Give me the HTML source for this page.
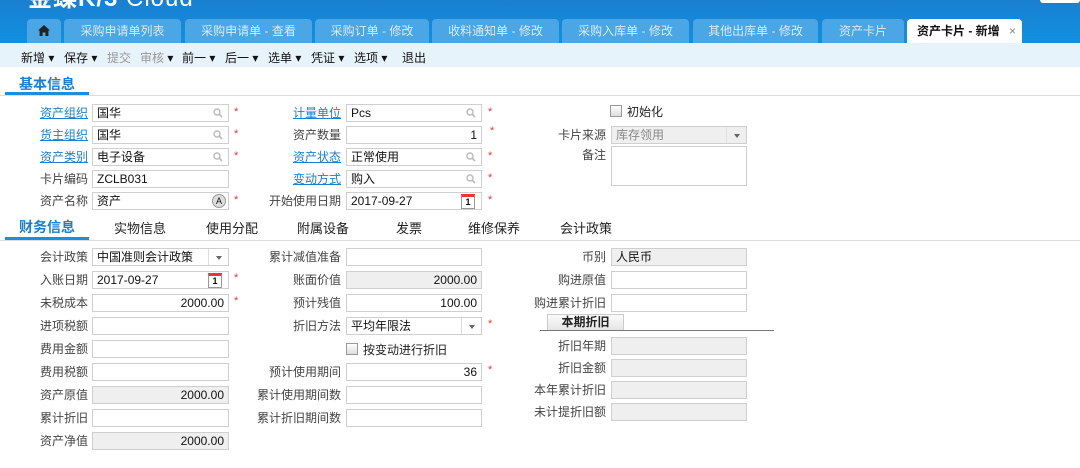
<!DOCTYPE html>
<html><head><meta charset="utf-8"><style>
*{margin:0;padding:0;box-sizing:border-box}
body{width:1080px;height:468px;overflow:hidden;background:#fff;font-family:"Liberation Sans","Noto Sans CJK SC",sans-serif;font-size:12px;color:#222;position:relative}
.a{position:absolute}
#hd{left:0;top:0;width:1080px;height:43px;background:linear-gradient(#1a7fd0,#1190e0)}
.tab{position:absolute;top:19px;height:24px;background:#4aa6e4;border-radius:4px 4px 0 0;color:#d6ecfb;font-size:12px;line-height:24px;text-align:center}
.tab.on{background:#fff;color:#111;font-weight:bold}
#tb{left:0;top:43px;width:1080px;height:24px;background:#e7f3fb}
.tbi{position:absolute;top:49px;font-size:12px;color:#111}
.l{position:absolute;width:140px;text-align:right;height:18px;line-height:18px;color:#444}
.l.u{color:#1a7fd0;text-decoration:underline}
.i{position:absolute;height:18px;border:1px solid #cfcfcf;background:#fff;line-height:16px;padding:0 4px;font-size:12px;color:#111}
.g{background:#efefef}
.r{text-align:right}
.s{position:absolute;color:#e33;font-size:11px}
.q{position:absolute;right:5px;top:3px;width:10px;height:10px}
.dd{position:absolute;right:0;top:0;width:20px;height:16px;border-left:1px solid #ddd}
.dd:after{content:"";position:absolute;left:7px;top:7px;border:3px solid transparent;border-top:4px solid #666}
.cal{position:absolute;right:6px;top:1px;width:14px;height:15px;border:1px solid #999;border-top:3px solid #e33;background:#fff;font-size:9px;font-weight:bold;text-align:center;line-height:11px}
.cb{position:absolute;width:12px;height:12px;border:1px solid #999;background:linear-gradient(#fff,#ddd)}
.t2{position:absolute;top:218px;font-size:13px;color:#222}
</style></head><body>
<div id="hd" class="a"></div>
<div class="a" style="left:28px;top:-22px;color:#fff;font-size:24px;font-weight:bold;letter-spacing:1px">金蝶K/3 <span style="font-weight:normal">Cloud</span></div>
<div class="a" style="left:1040px;top:-4px;width:40px;height:7px;background:#fff;border-radius:3px"></div>
<div class="tab" style="left:27px;width:34px"><svg width="12" height="11" viewBox="0 0 12 11" style="margin-top:6px"><path d="M6 0L0 5.5H1.6V11H4.6V7.5H7.4V11H10.4V5.5H12Z" fill="#222"/></svg></div>
<div class="tab" style="left:64px;width:117px">采购申请单列表</div>
<div class="tab" style="left:185px;width:127px">采购申请单 - 查看</div>
<div class="tab" style="left:315px;width:114px">采购订单 - 修改</div>
<div class="tab" style="left:432px;width:127px">收料通知单 - 修改</div>
<div class="tab" style="left:562px;width:127px">采购入库单 - 修改</div>
<div class="tab" style="left:693px;width:125px">其他出库单 - 修改</div>
<div class="tab" style="left:822px;width:82px">资产卡片</div>
<div class="tab on" style="left:907px;width:115px;text-align:left;padding-left:10px">资产卡片 - 新增 <span style="color:#888;margin-left:6px;font-weight:normal">×</span></div>
<div id="tb" class="a"></div>
<div class="tbi" style="left:21px">新增 ▾</div>
<div class="tbi" style="left:64px">保存 ▾</div>
<div class="tbi" style="left:107px;color:#999">提交</div>
<div class="tbi" style="left:140px;color:#999">审核 <span style="color:#111">▾</span></div>
<div class="tbi" style="left:182px">前一 ▾</div>
<div class="tbi" style="left:225px">后一 ▾</div>
<div class="tbi" style="left:268px">选单 ▾</div>
<div class="tbi" style="left:311px">凭证 ▾</div>
<div class="tbi" style="left:354px">选项 ▾</div>
<div class="tbi" style="left:402px">退出</div>

<div class="a" style="left:19px;top:74px;font-size:14px;font-weight:bold;color:#1a7fd0">基本信息</div>
<div class="a" style="left:0;top:95px;width:1080px;height:1px;background:#ddd"></div>
<div class="a" style="left:5px;top:92px;width:84px;height:3px;background:#1a8ee0"></div>

<div class="l u" style="left:-52px;top:104px">资产组织</div><div class="i" style="left:92px;top:104px;width:137px">国华<svg class="q" viewBox="0 0 10 10"><circle cx="4" cy="4" r="3" fill="none" stroke="#bbb" stroke-width="1.4"/><path d="M6 6L9 9" stroke="#bbb" stroke-width="1.6"/></svg></div><div class="s" style="left:234px;top:106px">*</div>
<div class="l u" style="left:-52px;top:126px">货主组织</div><div class="i" style="left:92px;top:126px;width:137px">国华<svg class="q" viewBox="0 0 10 10"><circle cx="4" cy="4" r="3" fill="none" stroke="#bbb" stroke-width="1.4"/><path d="M6 6L9 9" stroke="#bbb" stroke-width="1.6"/></svg></div><div class="s" style="left:234px;top:128px">*</div>
<div class="l u" style="left:-52px;top:148px">资产类别</div><div class="i" style="left:92px;top:148px;width:137px">电子设备<svg class="q" viewBox="0 0 10 10"><circle cx="4" cy="4" r="3" fill="none" stroke="#bbb" stroke-width="1.4"/><path d="M6 6L9 9" stroke="#bbb" stroke-width="1.6"/></svg></div><div class="s" style="left:234px;top:150px">*</div>
<div class="l" style="left:-52px;top:170px">卡片编码</div><div class="i" style="left:92px;top:170px;width:137px">ZCLB031</div>
<div class="l" style="left:-52px;top:192px">资产名称</div><div class="i" style="left:92px;top:192px;width:137px">资产<div style="position:absolute;right:2px;top:1px;width:14px;height:14px;border-radius:50%;background:#ddd;border:1px solid #999;font-size:9px;line-height:12px;text-align:center">A</div></div><div class="s" style="left:234px;top:194px">*</div>

<div class="l u" style="left:201px;top:104px">计量单位</div><div class="i" style="left:346px;top:104px;width:136px">Pcs<svg class="q" viewBox="0 0 10 10"><circle cx="4" cy="4" r="3" fill="none" stroke="#bbb" stroke-width="1.4"/><path d="M6 6L9 9" stroke="#bbb" stroke-width="1.6"/></svg></div><div class="s" style="left:488px;top:106px">*</div>
<div class="l" style="left:201px;top:126px">资产数量</div><div class="i r" style="left:346px;top:126px;width:136px">1</div><div class="s" style="left:490px;top:125px">*</div>
<div class="l u" style="left:201px;top:148px">资产状态</div><div class="i" style="left:346px;top:148px;width:136px">正常使用<svg class="q" viewBox="0 0 10 10"><circle cx="4" cy="4" r="3" fill="none" stroke="#bbb" stroke-width="1.4"/><path d="M6 6L9 9" stroke="#bbb" stroke-width="1.6"/></svg></div><div class="s" style="left:488px;top:150px">*</div>
<div class="l u" style="left:201px;top:170px">变动方式</div><div class="i" style="left:346px;top:170px;width:136px">购入<svg class="q" viewBox="0 0 10 10"><circle cx="4" cy="4" r="3" fill="none" stroke="#bbb" stroke-width="1.4"/><path d="M6 6L9 9" stroke="#bbb" stroke-width="1.6"/></svg></div><div class="s" style="left:488px;top:172px">*</div>
<div class="l" style="left:201px;top:192px">开始使用日期</div><div class="i" style="left:346px;top:192px;width:136px">2017-09-27<div class="cal">1</div></div><div class="s" style="left:488px;top:194px">*</div>

<div class="cb" style="left:610px;top:105px"></div><div class="a" style="left:627px;top:103px">初始化</div>
<div class="l" style="left:466px;top:126px">卡片来源</div><div class="i g" style="left:611px;top:126px;width:136px;color:#888">库存领用<div class="dd" style="border-left-color:#e0e0e0"></div></div>
<div class="l" style="left:466px;top:146px">备注</div><div class="i" style="left:611px;top:146px;width:136px;height:40px"></div>

<div class="t2" style="left:19px;font-weight:bold;color:#1a7fd0;font-size:14px;top:217px">财务信息</div>
<div class="t2" style="left:114px">实物信息</div>
<div class="t2" style="left:206px">使用分配</div>
<div class="t2" style="left:297px">附属设备</div>
<div class="t2" style="left:396px">发票</div>
<div class="t2" style="left:468px">维修保养</div>
<div class="t2" style="left:560px">会计政策</div>
<div class="a" style="left:0;top:240px;width:1080px;height:1px;background:#ddd"></div>
<div class="a" style="left:5px;top:237px;width:84px;height:3px;background:#1a8ee0"></div>

<div class="l" style="left:-52px;top:248px">会计政策</div><div class="i" style="left:92px;top:248px;width:137px">中国准则会计政策<div class="dd"></div></div>
<div class="l" style="left:-52px;top:271px">入账日期</div><div class="i" style="left:92px;top:271px;width:137px">2017-09-27<div class="cal">1</div></div><div class="s" style="left:234px;top:272px">*</div>
<div class="l" style="left:-52px;top:294px">未税成本</div><div class="i r" style="left:92px;top:294px;width:137px">2000.00</div><div class="s" style="left:234px;top:295px">*</div>
<div class="l" style="left:-52px;top:317px">进项税额</div><div class="i" style="left:92px;top:317px;width:137px"></div>
<div class="l" style="left:-52px;top:340px">费用金额</div><div class="i" style="left:92px;top:340px;width:137px"></div>
<div class="l" style="left:-52px;top:363px">费用税额</div><div class="i" style="left:92px;top:363px;width:137px"></div>
<div class="l" style="left:-52px;top:386px">资产原值</div><div class="i g r" style="left:92px;top:386px;width:137px">2000.00</div>
<div class="l" style="left:-52px;top:409px">累计折旧</div><div class="i" style="left:92px;top:409px;width:137px"></div>
<div class="l" style="left:-52px;top:432px">资产净值</div><div class="i g r" style="left:92px;top:432px;width:137px">2000.00</div>

<div class="l" style="left:201px;top:248px">累计减值准备</div><div class="i" style="left:346px;top:248px;width:136px"></div>
<div class="l" style="left:201px;top:271px">账面价值</div><div class="i g r" style="left:346px;top:271px;width:136px">2000.00</div>
<div class="l" style="left:201px;top:294px">预计残值</div><div class="i r" style="left:346px;top:294px;width:136px">100.00</div>
<div class="l" style="left:201px;top:317px">折旧方法</div><div class="i" style="left:346px;top:317px;width:136px">平均年限法<div class="dd"></div></div><div class="s" style="left:488px;top:318px">*</div>
<div class="cb" style="left:346px;top:343px"></div><div class="a" style="left:363px;top:341px">按变动进行折旧</div>
<div class="l" style="left:201px;top:363px">预计使用期间</div><div class="i r" style="left:346px;top:363px;width:136px">36</div><div class="s" style="left:488px;top:364px">*</div>
<div class="l" style="left:201px;top:386px">累计使用期间数</div><div class="i" style="left:346px;top:386px;width:136px"></div>
<div class="l" style="left:201px;top:409px">累计折旧期间数</div><div class="i" style="left:346px;top:409px;width:136px"></div>

<div class="l" style="left:466px;top:248px">币别</div><div class="i g" style="left:611px;top:248px;width:136px">人民币</div>
<div class="l" style="left:466px;top:271px">购进原值</div><div class="i" style="left:611px;top:271px;width:136px"></div>
<div class="l" style="left:466px;top:294px">购进累计折旧</div><div class="i" style="left:611px;top:294px;width:136px"></div>
<div class="a" style="left:547px;top:314px;width:77px;height:16px;background:linear-gradient(#fafafa,#e6e6e6);border:1px solid #ccc;border-bottom:none;text-align:center;font-weight:bold;line-height:15px;font-size:12px">本期折旧</div>
<div class="a" style="left:540px;top:330px;width:234px;height:1px;background:#777"></div>
<div class="l" style="left:466px;top:337px">折旧年期</div><div class="i g" style="left:611px;top:337px;width:136px"></div>
<div class="l" style="left:466px;top:359px">折旧金额</div><div class="i g" style="left:611px;top:359px;width:136px"></div>
<div class="l" style="left:466px;top:381px">本年累计折旧</div><div class="i g" style="left:611px;top:381px;width:136px"></div>
<div class="l" style="left:466px;top:403px">未计提折旧额</div><div class="i g" style="left:611px;top:403px;width:136px"></div>
</body></html>
